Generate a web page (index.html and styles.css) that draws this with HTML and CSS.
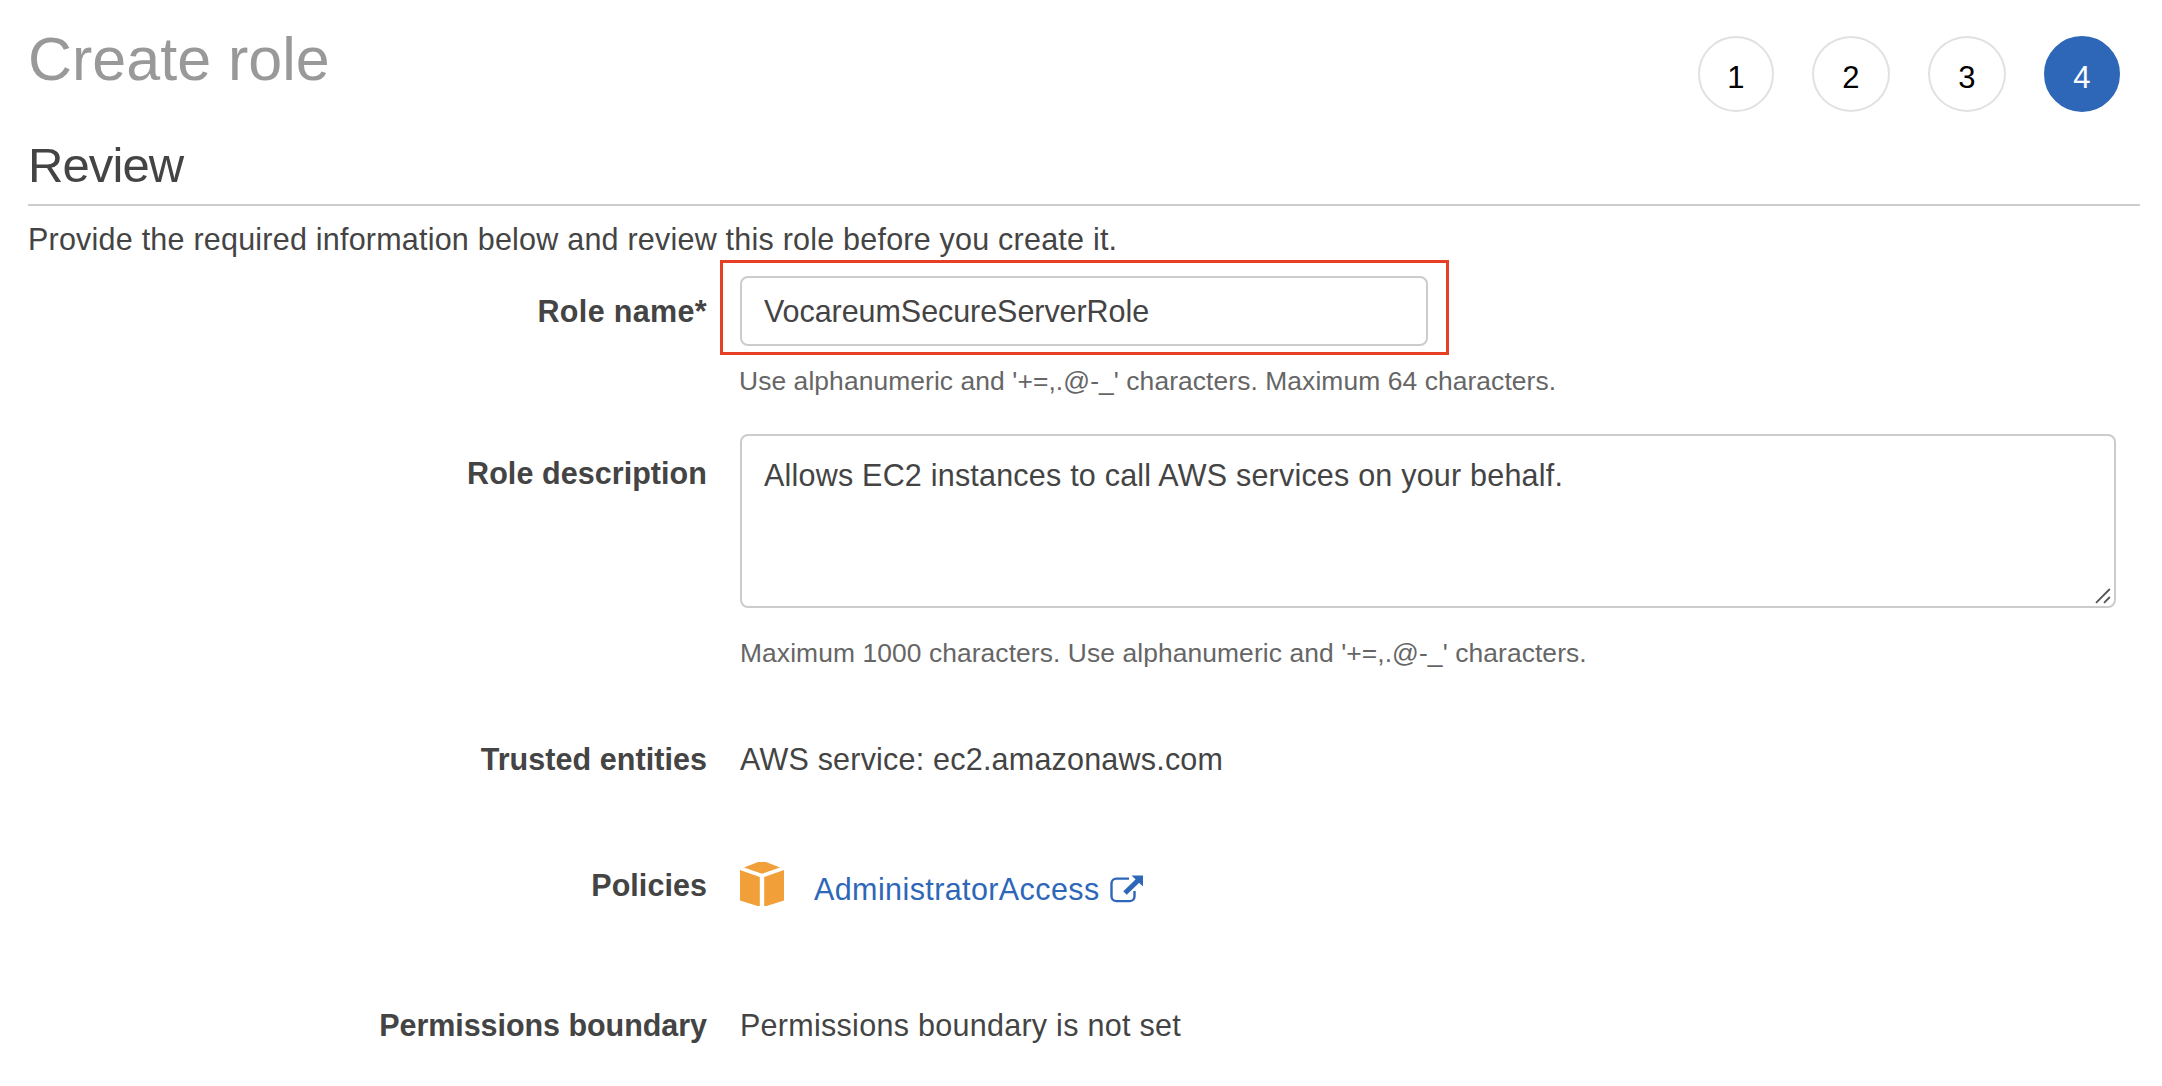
FILE: index.html
```html
<!DOCTYPE html>
<html lang="en">
<head>
<meta charset="utf-8">
<title>Create role</title>
<link rel="stylesheet" href="styles.css">
</head>
<body>
<header class="page-header">
  <h1 class="page-title">Create role</h1>
  <ol class="steps">
    <li class="step">1</li>
    <li class="step step-wide">2</li>
    <li class="step step-wide">3</li>
    <li class="step step-active">4</li>
  </ol>
</header>
<main>
  <h2 class="section-title">Review</h2>
  <p class="intro">Provide the required information below and review this role before you create it.</p>
  <form class="form">
    <div class="row row-name">
      <label class="label label-name" for="role-name">Role name*</label>
      <div class="field">
        <div class="highlighted">
          <input class="control input" id="role-name" type="text" value="VocareumSecureServerRole">
        </div>
        <p class="hint">Use alphanumeric and '+=,.@-_' characters. Maximum 64 characters.</p>
      </div>
    </div>
    <div class="row row-description">
      <label class="label" for="role-description">Role description</label>
      <div class="field">
        <div class="textarea-wrap">
          <textarea class="control textarea" id="role-description">Allows EC2 instances to call AWS services on your behalf.</textarea>
          <svg class="grip" viewBox="0 0 16 16" aria-hidden="true"><path d="M1 14.8 14.8 1M9 14.8 14.8 9"/></svg>
        </div>
        <p class="hint hint-description">Maximum 1000 characters. Use alphanumeric and '+=,.@-_' characters.</p>
      </div>
    </div>
    <div class="row row-trusted">
      <span class="label">Trusted entities</span>
      <span class="value">AWS service: ec2.amazonaws.com</span>
    </div>
    <div class="row row-policies">
      <span class="label">Policies</span>
      <div class="policy">
        <svg class="cube" viewBox="0 0 44 44" aria-hidden="true">
          <path d="M4 5.5 18 0h8L40 5.5 22 11.8zM0 8 19.8 15v29H17.5L0 38.5zM44 8 24.2 15v29h2.3L44 38.5z"/>
        </svg>
        <a class="policy-link" href="#">AdministratorAccess</a>
        <svg class="external" viewBox="0 0 34 28" aria-hidden="true">
          <path class="external-box" d="M19 3.6H6.3a4.8 4.8 0 0 0-4.8 4.8v12.9a4.8 4.8 0 0 0 4.8 4.8h13.4a4.8 4.8 0 0 0 4.8-4.8V16"/>
          <path class="external-shaft" d="M15 18 28 5.5"/>
          <path class="external-head" d="M21.5.5H33v11z"/>
        </svg>
      </div>
    </div>
    <div class="row row-boundary">
      <span class="label label-boundary">Permissions boundary</span>
      <span class="value value-boundary">Permissions boundary is not set</span>
    </div>
  </form>
</main>
</body>
</html>
```
FILE: styles.css
```css
* {
  box-sizing: border-box;
}

body {
  margin: 0;
  padding: 0 22px 0 28px;
  background: #fff;
  color: #444;
  font: 30.5px/36px "Liberation Sans", Arial, sans-serif;
  letter-spacing: 0.21px;
}

h1, h2, p, ol {
  margin: 0;
  padding: 0;
  font-weight: normal;
}

.page-header {
  display: flex;
  justify-content: space-between;
  height: 136px;
  padding: 24px 20px 0 0;
}

.page-title {
  color: #999;
  font-size: 61px;
  line-height: 70px;
  letter-spacing: 0;
}

.steps {
  display: flex;
  gap: 38px;
  padding-top: 12px;
  list-style: none;
}

.step {
  width: 76px;
  height: 76px;
  padding-top: 4px;
  border: 2px solid #e1e1e1;
  border-radius: 50%;
  color: #000;
  font-size: 31px;
  line-height: 72px;
  text-align: center;
}

.step-wide {
  width: 78px;
}

.step-active {
  border-color: #2e67b8;
  background: #2e67b8;
  color: #fff;
}

.section-title {
  height: 70px;
  border-bottom: 2px solid #ccc;
  font-size: 49px;
  line-height: 58px;
  letter-spacing: -0.9px;
}

.intro {
  margin-top: 15px;
  letter-spacing: 0.22px;
}

.row {
  display: grid;
  grid-template-columns: 679px 1376px;
  column-gap: 33px;
}

.label {
  font-weight: bold;
  letter-spacing: 0.06px;
  text-align: right;
}

.label-name {
  letter-spacing: 0.34px;
}

.label-boundary {
  letter-spacing: -0.05px;
}

.row-name {
  margin-top: 19px;
}

.row-name .label {
  padding-top: 17px;
}

.highlighted {
  position: relative;
  width: 688px;
}

.highlighted::after {
  content: "";
  position: absolute;
  inset: -16px -21px -9px -20px;
  border: 3px solid #e73f25;
  pointer-events: none;
}

.control {
  display: block;
  width: 100%;
  margin: 0;
  border: 2px solid #ccc;
  border-radius: 8px;
  outline: 0;
  background: #fff;
  color: #444;
  font: inherit;
  letter-spacing: inherit;
}

.input {
  height: 70px;
  padding: 0 22px;
  letter-spacing: -0.06px;
}

.textarea-wrap {
  position: relative;
}

.textarea {
  height: 174px;
  padding: 21px 22px;
  overflow: hidden;
  resize: none;
}

.grip {
  position: absolute;
  right: 5px;
  bottom: 4px;
  width: 16px;
  height: 16px;
  fill: none;
  stroke: #555;
  stroke-width: 1.8;
}

.hint {
  margin: 19px 0 0 -1px;
  color: #666;
  font-size: 26.4px;
  line-height: 32px;
  letter-spacing: 0.09px;
}

.hint-description {
  margin: 29px 0 0;
}

.row-description {
  margin-top: 37px;
}

.row-description .label {
  padding-top: 21px;
}

.row-trusted {
  margin-top: 72px;
}

.row-policies {
  margin-top: 85px;
}

.row-policies .label {
  padding-top: 5px;
}

.policy {
  display: flex;
  align-items: flex-start;
  height: 46px;
}

.cube {
  width: 44px;
  height: 44px;
  margin-right: 30px;
  fill: #f19f39;
}

.policy-link {
  padding-top: 9px;
  color: #2e67b8;
  letter-spacing: 0.4px;
  text-decoration: none;
}

.external {
  width: 34px;
  height: 28px;
  margin: 13px 0 0 10px;
}

.external-box,
.external-shaft {
  fill: none;
  stroke: #2e67b8;
  stroke-width: 2.4;
}

.external-shaft {
  stroke-width: 5;
}

.external-head {
  fill: #2e67b8;
}

.row-boundary {
  margin-top: 99px;
}

.value-boundary {
  letter-spacing: 0.28px;
}
```
